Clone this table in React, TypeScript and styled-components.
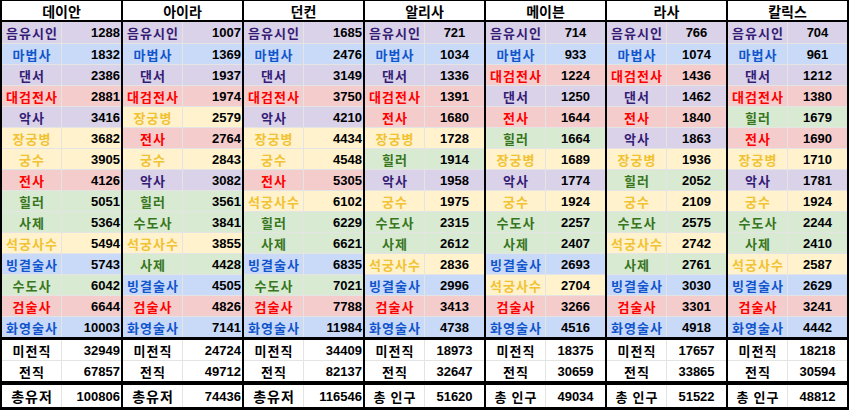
import React from "react";
import styled, { createGlobalStyle } from "styled-components";

const Global = createGlobalStyle`
  html, body { margin: 0; padding: 0; background: #ffffff; }
  body { font-family: "Liberation Sans", "Noto Sans CJK KR", sans-serif; }
`;

type Cat = "purple" | "blue" | "red" | "yellow" | "green";

const palette: Record<Cat, { bg: string; fg: string }> = {
  purple: { bg: "#d9d2e9", fg: "#351c75" },
  blue: { bg: "#c9daf8", fg: "#1155cc" },
  red: { bg: "#f4cccc", fg: "#ff0000" },
  yellow: { bg: "#fff2cc", fg: "#f1c232" },
  green: { bg: "#d9ead3", fg: "#38761d" },
};

const classCat: Record<string, Cat> = {
  음유시인: "purple",
  댄서: "purple",
  악사: "purple",
  마법사: "blue",
  빙결술사: "blue",
  화영술사: "blue",
  대검전사: "red",
  전사: "red",
  검술사: "red",
  장궁병: "yellow",
  궁수: "yellow",
  석궁사수: "yellow",
  힐러: "green",
  사제: "green",
  수도사: "green",
};

type Server = {
  name: string;
  align: "right" | "center";
  rows: [string, number][];
  unclassed: number;
  classed: number;
  totalLabel: string;
  total: number;
};

const servers: Server[] = [
  {
    name: "데이안",
    align: "right",
    rows: [
      ["음유시인", 1288], ["마법사", 1832], ["댄서", 2386], ["대검전사", 2881], ["악사", 3416],
      ["장궁병", 3682], ["궁수", 3905], ["전사", 4126], ["힐러", 5051], ["사제", 5364],
      ["석궁사수", 5494], ["빙결술사", 5743], ["수도사", 6042], ["검술사", 6644], ["화영술사", 10003],
    ],
    unclassed: 32949, classed: 67857, totalLabel: "총유저", total: 100806,
  },
  {
    name: "아이라",
    align: "right",
    rows: [
      ["음유시인", 1007], ["마법사", 1369], ["댄서", 1937], ["대검전사", 1974], ["장궁병", 2579],
      ["전사", 2764], ["궁수", 2843], ["악사", 3082], ["힐러", 3561], ["수도사", 3841],
      ["석궁사수", 3855], ["사제", 4428], ["빙결술사", 4505], ["검술사", 4826], ["화영술사", 7141],
    ],
    unclassed: 24724, classed: 49712, totalLabel: "총유저", total: 74436,
  },
  {
    name: "던컨",
    align: "right",
    rows: [
      ["음유시인", 1685], ["마법사", 2476], ["댄서", 3149], ["대검전사", 3750], ["악사", 4210],
      ["장궁병", 4434], ["궁수", 4548], ["전사", 5305], ["석궁사수", 6102], ["힐러", 6229],
      ["사제", 6621], ["빙결술사", 6835], ["수도사", 7021], ["검술사", 7788], ["화영술사", 11984],
    ],
    unclassed: 34409, classed: 82137, totalLabel: "총유저", total: 116546,
  },
  {
    name: "알리사",
    align: "center",
    rows: [
      ["음유시인", 721], ["마법사", 1034], ["댄서", 1336], ["대검전사", 1391], ["전사", 1680],
      ["장궁병", 1728], ["힐러", 1914], ["악사", 1958], ["궁수", 1975], ["수도사", 2315],
      ["사제", 2612], ["석궁사수", 2836], ["빙결술사", 2996], ["검술사", 3413], ["화영술사", 4738],
    ],
    unclassed: 18973, classed: 32647, totalLabel: "총 인구", total: 51620,
  },
  {
    name: "메이븐",
    align: "center",
    rows: [
      ["음유시인", 714], ["마법사", 933], ["대검전사", 1224], ["댄서", 1250], ["전사", 1644],
      ["힐러", 1664], ["장궁병", 1689], ["악사", 1774], ["궁수", 1924], ["수도사", 2257],
      ["사제", 2407], ["빙결술사", 2693], ["석궁사수", 2704], ["검술사", 3266], ["화영술사", 4516],
    ],
    unclassed: 18375, classed: 30659, totalLabel: "총 인구", total: 49034,
  },
  {
    name: "라사",
    align: "center",
    rows: [
      ["음유시인", 766], ["마법사", 1074], ["대검전사", 1436], ["댄서", 1462], ["전사", 1840],
      ["악사", 1863], ["장궁병", 1936], ["힐러", 2052], ["궁수", 2109], ["수도사", 2575],
      ["석궁사수", 2742], ["사제", 2761], ["빙결술사", 3030], ["검술사", 3301], ["화영술사", 4918],
    ],
    unclassed: 17657, classed: 33865, totalLabel: "총 인구", total: 51522,
  },
  {
    name: "칼릭스",
    align: "center",
    rows: [
      ["음유시인", 704], ["마법사", 961], ["댄서", 1212], ["대검전사", 1380], ["힐러", 1679],
      ["전사", 1690], ["장궁병", 1710], ["악사", 1781], ["궁수", 1924], ["수도사", 2244],
      ["사제", 2410], ["석궁사수", 2587], ["빙결술사", 2629], ["검술사", 3241], ["화영술사", 4442],
    ],
    unclassed: 18218, classed: 30594, totalLabel: "총 인구", total: 48812,
  },
];

const Sheet = styled.div`
  width: 849px;
  height: 410px;
  box-sizing: border-box;
  background: #000000;
  padding: 1px 2px 3px 2px;
  display: flex;
  gap: 2px;
`;

const ServerColumn = styled.div`
  width: 119px;
  display: flex;
  flex-direction: column;
`;

const Header = styled.div`
  height: 19px;
  background: #ffffff;
  display: flex;
  align-items: center;
  justify-content: center;
  font-family: "Noto Sans CJK KR", sans-serif;
  font-weight: 700;
  font-size: 14px;
  color: #000000;
`;

const Block = styled.div<{ $gap: number }>`
  margin-top: ${(p) => p.$gap}px;
  display: flex;
  flex-direction: column;
`;

const Row = styled.div<{ $bg: string; $h: number }>`
  height: ${(p) => p.$h}px;
  box-sizing: border-box;
  background: ${(p) => p.$bg};
  display: grid;
  grid-template-columns: 60px 59px;
  & + & {
    border-top: 1px solid #e4e4e4;
  }
`;

const NameCell = styled.div<{ $fg: string; $size: number }>`
  border-right: 1px solid #e4e4e4;
  display: flex;
  align-items: center;
  justify-content: center;
  padding-left: 1px;
  font-family: "Noto Sans CJK KR", sans-serif;
  font-weight: 700;
  font-size: ${(p) => p.$size}px;
  letter-spacing: 1px;
  color: ${(p) => p.$fg};
  white-space: nowrap;
  overflow: hidden;
`;

const NumCell = styled.div<{ $align: "right" | "center" }>`
  display: flex;
  align-items: center;
  justify-content: ${(p) => (p.$align === "right" ? "flex-end" : "center")};
  padding-right: ${(p) => (p.$align === "right" ? "1px" : "0")};
  font-family: "Liberation Sans", Arial, sans-serif;
  font-weight: 700;
  font-size: 13px;
  color: #000000;
`;

function Column({ s }: { s: Server }) {
  return (
    <ServerColumn>
      <Header>{s.name}</Header>
      <Block $gap={2}>
        {s.rows.map(([cls, n]) => {
          const c = palette[classCat[cls]];
          return (
            <Row key={cls} $bg={c.bg} $h={21}>
              <NameCell $fg={c.fg} $size={13}>{cls}</NameCell>
              <NumCell $align={s.align}>{n}</NumCell>
            </Row>
          );
        })}
      </Block>
      <Block $gap={3}>
        <Row $bg="#ffffff" $h={20}>
          <NameCell $fg="#000000" $size={13}>미전직</NameCell>
          <NumCell $align={s.align}>{s.unclassed}</NumCell>
        </Row>
        <Row $bg="#ffffff" $h={21}>
          <NameCell $fg="#000000" $size={13}>전직</NameCell>
          <NumCell $align={s.align}>{s.classed}</NumCell>
        </Row>
      </Block>
      <Block $gap={4}>
        <Row $bg="#ffffff" $h={22}>
          <NameCell $fg="#000000" $size={s.totalLabel === "총유저" ? 14 : 13}>
            {s.totalLabel}
          </NameCell>
          <NumCell $align={s.align}>{s.total}</NumCell>
        </Row>
      </Block>
    </ServerColumn>
  );
}

export default function App() {
  return (
    <>
      <Global />
      <Sheet>
        {servers.map((s) => (
          <Column key={s.name} s={s} />
        ))}
      </Sheet>
    </>
  );
}
